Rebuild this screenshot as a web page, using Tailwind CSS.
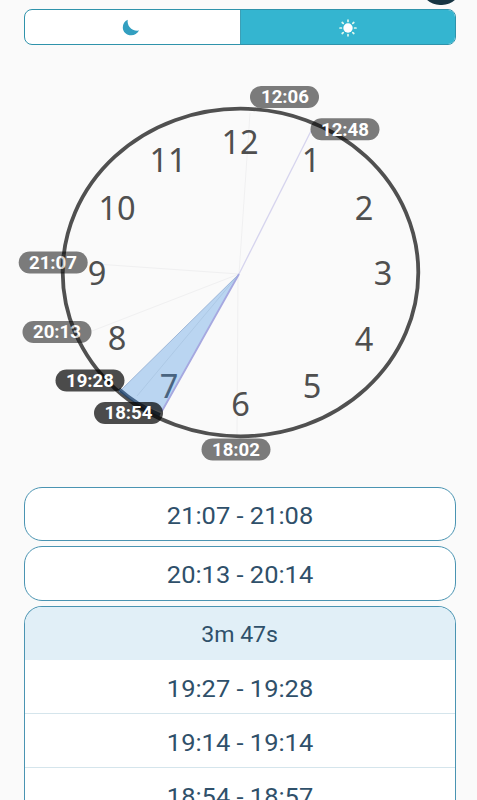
<!DOCTYPE html>
<html lang="en">
<head>
<meta charset="utf-8">
<title>Clock</title>
<script src="https://cdn.jsdelivr.net/npm/@tailwindcss/browser@4"></script>
</head>
<body class="relative h-[800px] w-[477px] overflow-hidden bg-[#fafafa] font-[Roboto,sans-serif] text-[#2f506a]">
<div class="absolute left-[421px] top-[-33px] h-[38px] w-[40px] rounded-full bg-[#173543]"></div>
<main class="ml-6 flex h-[800px] w-[432px] flex-col pt-[9px]">
  <div class="flex h-[36px] shrink-0 overflow-hidden rounded-[8px] border border-[#2f93ab] bg-white">
    <div class="flex w-[216px] items-center justify-center border-r border-[#3c9fb6] pr-[3px]">
      <svg class="mt-px h-[17px] w-[18px]" viewBox="0 0 18 17"><path d="M5.700.7C4.800 6.800 9.500 12.500 17 11.600C15.400 14.800 12.500 16.300 9.200 16.300C4.500 16.300.8 13 .8 8.500C.8 5 2.600 2.100 5.700.7Z" fill="#339fc0"/></svg>
    </div>
    <div class="flex flex-1 items-center justify-center bg-[#34b5d0]">
      <svg class="mt-px h-[18px] w-[18px]" viewBox="0 0 18 18"><circle cx="9" cy="9" r="4.700" fill="#fff"/><path d="M9 1.200v1.200M9 15.600v1.200M1 9h1.400M15.600 9h1.400M3.200 3.500l1 .9M13.800 13.600l1 .9M3.200 14.500l1-.9M13.800 4.400l1-.9" stroke="#e0f8ed" stroke-width="1.700" stroke-linecap="round"/></svg>
    </div>
  </div>
  <svg class="-ml-6 h-[442px] w-[477px] shrink-0" viewBox="0 45 477 442">
    <g stroke="#f0f0f1" stroke-width="1"><path d="M239 274L250 113M239 274L96 264M239 274L92 331M238 274L237 436"/></g>
    <path d="M239 274L311 131" stroke="#d6d4ee" stroke-width="1.300"/>
    <g font-family="Noto Sans, sans-serif" font-size="32.500" fill="#4f4f4f" text-anchor="middle">
      <text x="240" y="154">12</text><text x="311" y="171.500">1</text><text x="364" y="219.500">2</text><text x="383" y="285">3</text><text x="364" y="351">4</text><text x="312" y="398">5</text><text x="240.500" y="416">6</text><text x="169" y="398">7</text><text x="117" y="350">8</text><text x="97" y="285">9</text><text x="117" y="219.500">10</text><text x="168" y="171.500">11</text>
    </g>
    <ellipse cx="240.500" cy="272.500" rx="177.800" ry="163.800" fill="none" stroke="#505050" stroke-width="3.800"/>
    <path d="M239 274L119 392Q137 405 162 412Z" fill="#3f8ee0" fill-opacity=".34"/>
    <path d="M239 274L119 392" stroke="#8fabd0" stroke-width=".8"/>
    <path d="M239 274L137 396" stroke="#a9c5e2" stroke-width=".8"/>
    <path d="M239 274L162 411" stroke="#a6a8e0" stroke-width="1.800"/>
    <path d="M119 389Q137 405 160 415" fill="none" stroke="#1f3f66" stroke-width="3.600" stroke-opacity=".75"/>
    <g fill="#000">
      <g fill-opacity=".51"><rect x="250" y="86" width="69" height="22" rx="11"/><rect x="310.500" y="118.300" width="69" height="22" rx="11"/><rect x="18.700" y="251.500" width="69" height="22" rx="11"/><rect x="22.500" y="321" width="69" height="22" rx="11"/><rect x="201.500" y="438.500" width="69" height="22" rx="11"/></g>
      <g fill-opacity=".7"><rect x="55.500" y="369.500" width="69" height="22" rx="11"/><rect x="94" y="402" width="69" height="22" rx="11"/></g>
    </g>
    <g font-family="Roboto, sans-serif" font-weight="700" font-size="17.500" fill="#fff" text-anchor="middle">
      <text x="285" y="103.200" textLength="48" lengthAdjust="spacingAndGlyphs">12:06</text><text x="345" y="135.500" textLength="48" lengthAdjust="spacingAndGlyphs">12:48</text><text x="53" y="268.700" textLength="48" lengthAdjust="spacingAndGlyphs">21:07</text><text x="57" y="338.200" textLength="48" lengthAdjust="spacingAndGlyphs">20:13</text><text x="90" y="386.700" textLength="48" lengthAdjust="spacingAndGlyphs">19:28</text><text x="128.500" y="419.200" textLength="48" lengthAdjust="spacingAndGlyphs">18:54</text><text x="236" y="456" textLength="48" lengthAdjust="spacingAndGlyphs">18:02</text>
    </g>
    <g fill="none" stroke="#505050" stroke-width="3.800" stroke-opacity=".3"><path d="M63 254Q62 263 62.700 272M71 322Q75 334 81 343"/></g>
  </svg>
  <div class="flex min-h-0 flex-1 flex-col gap-[5px] text-center text-[24px]">
    <div class="flex h-[54px] shrink-0 items-center justify-center rounded-[18px] border border-[#4a94b2] bg-white pt-[3px]"><span class="scale-x-[1.06]">21:07 - 21:08</span></div>
    <div class="flex h-[55px] shrink-0 items-center justify-center rounded-[18px] border border-[#4a94b2] bg-white pt-0.5"><span class="scale-x-[1.06]">20:13 - 20:14</span></div>
    <div class="min-h-0 flex-1 overflow-hidden rounded-t-[18px] border border-b-0 border-[#4a94b2] bg-white">
      <div class="flex h-[53px] items-center justify-center bg-[#e1eff7] pt-0.5 text-[22px]"><span class="scale-x-[1.05]">3m 47s</span></div>
      <div class="flex h-[54px] items-center justify-center border-b border-[#d5e5ec] pt-1"><span class="scale-x-[1.06]">19:27 - 19:28</span></div>
      <div class="flex h-[54px] items-center justify-center border-b border-[#d5e5ec] pt-1"><span class="scale-x-[1.06]">19:14 - 19:14</span></div>
      <div class="flex h-[54px] items-center justify-center pt-1"><span class="scale-x-[1.06]">18:54 - 18:57</span></div>
    </div>
  </div>
</main>
</body>
</html>
